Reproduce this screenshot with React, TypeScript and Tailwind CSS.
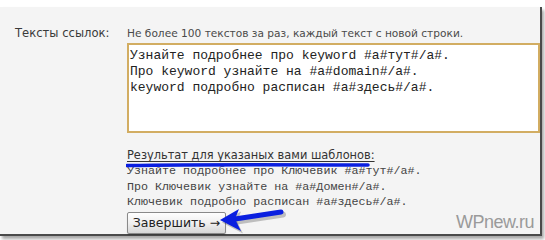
const sans = "font-['DejaVu_Sans',Verdana,sans-serif]";
const mono = "font-['Liberation_Mono','Courier_New',monospace]";

export default function App() {
  return (
    <div className="h-[240px] w-[545px] overflow-hidden bg-white pt-[7px]">
      <div className="relative h-[229px] w-[542px] border-r-2 border-b-2 border-[#4a4a4a] bg-[#f4f4f4] shadow-[2px_3px_3px_rgba(0,0,0,0.35)]">
        <div className="grid grid-cols-[127px_1fr] pt-[18px]">
          <div className={`${sans} pl-[15px] text-[11.6px] leading-[16px] text-[#3a3a3a]`}>Тексты ссылок:</div>
          <div>
            <div className={`${sans} text-[10.6px] leading-[16px] text-[#4a4a4a]`}>
              Не более 100 текстов за раз, каждый текст с новой строки.
            </div>
            <div
              className={`${mono} mt-[2px] h-[90px] border-2 border-[#d2ad62] bg-white px-[1px] pt-[3px] text-[13px] leading-[16px] text-[#222] whitespace-pre`}
            >
              {"Узнайте подробнее про keyword #a#тут#/a#.\nПро keyword узнайте на #a#domain#/a#.\nkeyword подробно расписан #a#здесь#/a#."}
            </div>

            <div
              className={`${sans} relative mt-[15px] w-fit text-[11.4px] leading-[15px] text-[#333] underline underline-offset-2 [text-decoration-skip-ink:none]`}
            >
              Результат для указаных вами шаблонов:
              <svg className="absolute left-[-1px] top-[14px]" width="244" height="6" viewBox="0 0 244 6">
                <path d="M1 3.5 C 60 2.5, 150 2.5, 242 3" stroke="#0a1fe0" strokeWidth="3.5" strokeLinecap="round" fill="none" />
              </svg>
            </div>
            <div className={`${mono} mt-[1px] text-[11.7px] leading-[15.5px] text-[#444] whitespace-pre`}>
              {"Узнайте подробнее про Ключевик #a#тут#/a#.\nПро Ключевик узнайте на #a#Домен#/a#.\nКлючевик подробно расписан #a#здесь#/a#."}
            </div>

            <div className="relative mt-[1px] flex">
              <button
                className={`${sans} h-[22px] w-[99px] rounded-[2px] border border-[#8a8a8a] bg-gradient-to-b from-[#ffffff] via-[#f0f0f0] to-[#d6d6d6] text-[12.5px] leading-[20px] text-[#222] shadow-[0_1px_1px_rgba(0,0,0,0.2)]`}
              >
                Завершить →
              </button>
              <svg className="absolute left-[90px] top-[-6px]" width="72" height="30" viewBox="0 0 72 30">
                <g transform="translate(2,2.5)" fill="rgba(0,0,0,0.22)">
                  <path d="M18 13 L 64 6" stroke="rgba(0,0,0,0.22)" strokeWidth="6" strokeLinecap="round" fill="none" />
                  <path d="M3 14 L 22 3 L 18 13 L 24 25 Z" />
                </g>
                <path d="M18 13 L 64 6" stroke="#0a1fe0" strokeWidth="5" strokeLinecap="round" fill="none" />
                <path d="M3 14 L 22 3 L 18 13 L 24 25 Z" fill="#0a1fe0" />
              </svg>
            </div>
          </div>
        </div>

        <div className="absolute bottom-[1px] right-[6px] font-['Liberation_Sans',Arial,sans-serif] text-[18px] leading-[22px] tracking-[-0.5px] text-[#9a9a9a]">
          WPnew.ru
        </div>
      </div>
    </div>
  );
}
